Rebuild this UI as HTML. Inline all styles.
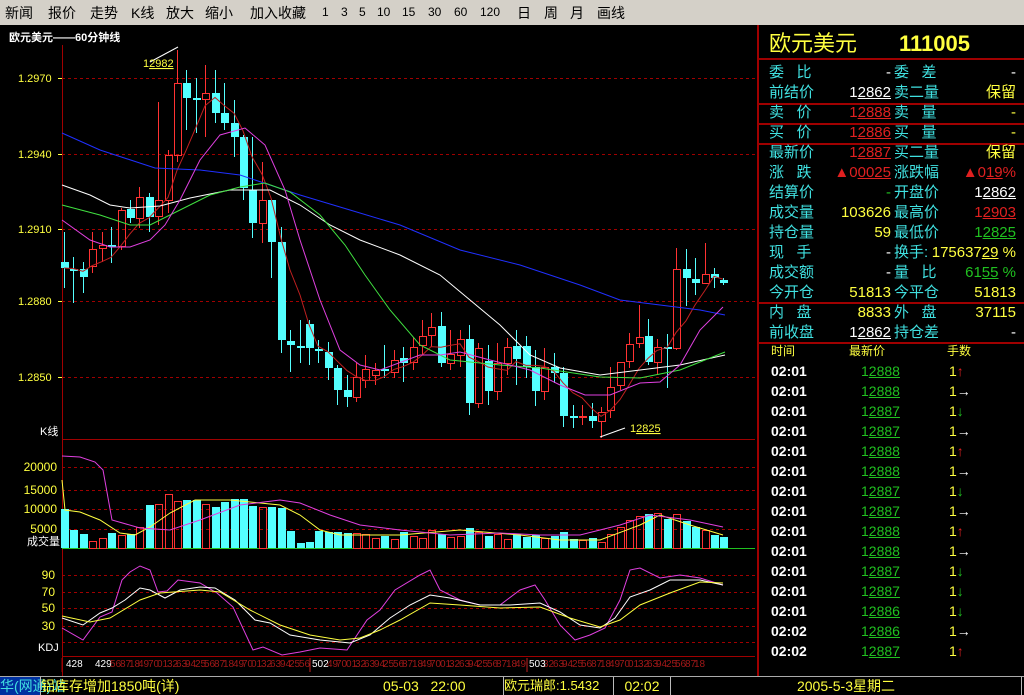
<!DOCTYPE html>
<html><head><meta charset="utf-8">
<style>
*{margin:0;padding:0;box-sizing:border-box}
body{width:1024px;height:695px;background:#000;overflow:hidden;position:relative;font-family:"Liberation Sans","Noto Sans CJK SC",sans-serif}
#menu{position:absolute;left:0;top:0;width:1024px;height:25px;background:#d4d0c8;font-size:14px;color:#000}
#menu span{position:absolute;top:3px;white-space:nowrap}
#rp{position:absolute;left:757px;top:25px;width:267px;height:651px;border-left:2px solid #a00000}
.r{position:absolute;font-size:15px;line-height:20px;white-space:nowrap}
.l1{left:10px;color:#40e0e0}.l2{left:135px;color:#40e0e0}
.v1{right:133px}.v2{right:8px}
.y{color:#ffff40}.w{color:#fff}.rd{color:#e02020}.g{color:#20c020}
.sep{position:absolute;left:0;width:267px;height:2px;background:#a00000}
u{text-decoration:underline}
.t{position:absolute;font-size:14px;line-height:20px;white-space:nowrap}
#sb{position:absolute;left:0;top:676px;width:1024px;height:19px;background:#000;border-top:1px solid #aaa;font-size:14px;color:#ffff40}
#sb div{position:absolute;top:0;height:18px;line-height:18px;white-space:nowrap;border-left:1px solid #bbb}
</style></head><body>
<div id="menu">
<span style="left:5px">新闻</span><span style="left:48px">报价</span><span style="left:90px">走势</span><span style="left:131px">K线</span><span style="left:166px">放大</span><span style="left:205px">缩小</span><span style="left:250px">加入收藏</span><span style="left:322px;font-size:12px;top:5px">1</span><span style="left:341px;font-size:12px;top:5px">3</span><span style="left:359px;font-size:12px;top:5px">5</span><span style="left:377px;font-size:12px;top:5px">10</span><span style="left:402px;font-size:12px;top:5px">15</span><span style="left:428px;font-size:12px;top:5px">30</span><span style="left:454px;font-size:12px;top:5px">60</span><span style="left:480px;font-size:12px;top:5px">120</span><span style="left:517px">日</span><span style="left:544px">周</span><span style="left:570px">月</span><span style="left:597px">画线</span>
</div>
<svg id="ch" width="757" height="651" style="position:absolute;left:0;top:25px" viewBox="0 25 757 651"></svg>
<div id="rp">
<div class="r y" style="left:10px;top:6px;font-size:22px;line-height:26px">欧元美元</div>
<div class="r y" style="left:140px;top:6px;font-size:22px;line-height:26px;font-weight:bold">111005</div>
<div class="sep" style="top:33px"></div>
<div class="r l1" style="top:38px">委&nbsp;&nbsp;&nbsp;比</div><div class="r v1 w" style="top:38px">-</div><div class="r l2" style="top:38px">委&nbsp;&nbsp;&nbsp;差</div><div class="r v2 w" style="top:38px">-</div>
<div class="r l1" style="top:58px">前结价</div><div class="r v1 w" style="top:58px">1<u>2862</u></div><div class="r l2" style="top:58px">卖二量</div><div class="r v2 y" style="top:58px">保留</div>
<div class="sep" style="top:78px"></div>
<div class="r l1" style="top:78px">卖&nbsp;&nbsp;&nbsp;价</div><div class="r v1 rd" style="top:78px">1<u>2888</u></div><div class="r l2" style="top:78px">卖&nbsp;&nbsp;&nbsp;量</div><div class="r v2 y" style="top:78px">-</div>
<div class="sep" style="top:98px"></div>
<div class="r l1" style="top:98px">买&nbsp;&nbsp;&nbsp;价</div><div class="r v1 rd" style="top:98px">1<u>2886</u></div><div class="r l2" style="top:98px">买&nbsp;&nbsp;&nbsp;量</div><div class="r v2 y" style="top:98px">-</div>
<div class="sep" style="top:118px"></div>
<div class="r l1" style="top:118px">最新价</div><div class="r v1 rd" style="top:118px">1<u>2887</u></div><div class="r l2" style="top:118px">买二量</div><div class="r v2 y" style="top:118px">保留</div>
<div class="r l1" style="top:138px">涨&nbsp;&nbsp;&nbsp;跌</div><div class="r v1 rd" style="top:138px">▲0<u>0025</u></div><div class="r l2" style="top:138px">涨跌幅</div><div class="r v2 rd" style="top:138px">▲0<u>19</u>%</div>
<div class="r l1" style="top:158px">结算价</div><div class="r v1 g" style="top:158px">-</div><div class="r l2" style="top:158px">开盘价</div><div class="r v2 w" style="top:158px">1<u>2862</u></div>
<div class="r l1" style="top:178px">成交量</div><div class="r v1 y" style="top:178px">103626</div><div class="r l2" style="top:178px">最高价</div><div class="r v2 rd" style="top:178px">1<u>2903</u></div>
<div class="r l1" style="top:198px">持仓量</div><div class="r v1 y" style="top:198px">59</div><div class="r l2" style="top:198px">最低价</div><div class="r v2 g" style="top:198px">1<u>2825</u></div>
<div class="r l1" style="top:218px">现&nbsp;&nbsp;&nbsp;手</div><div class="r v1 w" style="top:218px">-</div><div class="r l2" style="top:218px">换手:</div><div class="r v2 y" style="top:218px">175637<u>29</u> %</div>
<div class="r l1" style="top:238px">成交额</div><div class="r v1 w" style="top:238px">-</div><div class="r l2" style="top:238px">量&nbsp;&nbsp;&nbsp;比</div><div class="r v2 g" style="top:238px">61<u>55</u> %</div>
<div class="r l1" style="top:258px">今开仓</div><div class="r v1 y" style="top:258px">51813</div><div class="r l2" style="top:258px">今平仓</div><div class="r v2 y" style="top:258px">51813</div>
<div class="sep" style="top:277px"></div>
<div class="r l1" style="top:278px">内&nbsp;&nbsp;&nbsp;盘</div><div class="r v1 y" style="top:278px">8833</div><div class="r l2" style="top:278px">外&nbsp;&nbsp;&nbsp;盘</div><div class="r v2 y" style="top:278px">37115</div>
<div class="r l1" style="top:298px">前收盘</div><div class="r v1 w" style="top:298px">1<u>2862</u></div><div class="r l2" style="top:298px">持仓差</div><div class="r v2 w" style="top:298px">-</div>
<div class="sep" style="top:317px"></div>
<div class="t y" style="left:12px;top:316px;font-size:12px">时间</div><div class="t y" style="left:90px;top:316px;font-size:12px">最新价</div><div class="t y" style="left:188px;top:316px;font-size:12px">手数</div>
<div id="ticks"></div>
</div>
<div id="sb">
<div style="left:0;width:40px;border:none;background:#0030a0;color:#40e0e0">华(网通)站</div>
<div style="left:40px;width:218px;overflow:hidden">铝库存增加1850吨(详)</div>
<div style="left:258px;width:245px;border:none;padding-left:125px">05-03&nbsp;&nbsp;&nbsp;22:00</div>
<div style="left:503px;width:110px;font-size:13px">欧元瑞郎:1.5432</div>
<div style="left:613px;width:57px;text-align:center">02:02</div>
<div style="left:670px;width:352px;text-align:center;border-right:1px solid #bbb">2005-5-3星期二</div>
</div>
<script>
var S='';
function L(x1,y1,x2,y2,c,d){S+='<line x1="'+x1+'" y1="'+y1+'" x2="'+x2+'" y2="'+y2+'" stroke="'+c+'"'+(d?' stroke-dasharray="3,3"':'')+'/>';}
function T(x,y,t,c,s,a,w){S+='<text x="'+x+'" y="'+y+'" fill="'+c+'" font-size="'+s+'" font-family="Liberation Sans,Noto Sans CJK SC,sans-serif"'+(a?' text-anchor="'+a+'"':'')+(w?' font-weight="bold"':'')+'>'+t+'</text>';}
function P(pts,c){S+='<polyline fill="none" stroke="'+c+'" stroke-width="1" points="'+pts.map(function(p){return p.join(',')}).join(' ')+'"/>';}
L(62.5,45,62.5,676,'#a00000');
[78,154,229,301,377].forEach(function(y,i){L(62,y+.5,755,y+.5,'#a00000',1);T(18,y+4,['1.2970','1.2940','1.2910','1.2880','1.2850'][i],'#ffff40',11);L(58,y+.5,62,y+.5,'#ffff40');});
L(62,439.5,755,439.5,'#a00000');T(40,435,'K线','#fff',11);
[467,490,509,529].forEach(function(y,i){L(62,y+.5,755,y+.5,'#a00000',1);T(57,y+4,['20000','15000','10000','5000'][i],'#ffff40',12,'end');});
L(62,548.5,755,548.5,'#20c020');T(60,545,'成交量','#fff',11,'end');
[575,592,608,626,642].forEach(function(y,i){L(62,y+.5,755,y+.5,'#a00000',1);T(55,y+4,['90','70','50','30',''][i],'#ffff40',12,'end');});
T(38,651,'KDJ','#fff',11);
L(62,656.5,755,656.5,'#a00000');
T(9,41,'欧元美元——60分钟线','#fff',11,0,1);
var C=[[262,268,232,288],[269,269,257,303],[269,277,262,293],[266,249,232,273],[248,245,232,262],[245,247,227,263],[246,210,208,250],[209,218,200,223],[218,197,187,228],[197,217,193,232],[216,200,102,225],[200,155,150,213],[155,83,50,162],[83,98,70,130],[98,100,78,133],[99,93,65,137],[93,113,70,123],[113,123,83,130],[123,137,100,157],[137,188,135,200],[190,223,137,238],[223,200,162,243],[200,242,200,278],[242,340,227,353],[341,345,330,372],[346,348,320,363],[324,348,320,365],[349,350,340,363],[352,368,342,380],[368,390,365,405],[390,397,375,407],[397,377,363,402],[380,369,355,388],[375,370,363,385],[369,371,345,378],[372,360,350,378],[358,363,347,382],[362,347,337,370],[345,336,320,355],[335,327,313,347],[326,363,312,367],[363,354,330,370],[355,339,330,367],[339,403,325,415],[403,348,343,408],[361,391,345,405],[391,363,343,400],[363,347,338,375],[346,359,330,385],[346,367,336,378],[367,391,350,406],[391,367,348,400],[367,373,353,383],[373,416,367,427],[416,417,405,428],[417,416,405,425],[416,421,403,428],[421,412,407,438],[410,387,367,418],[385,362,362,390],[361,344,333,368],[343,337,305,348],[336,362,319,365],[362,347,339,375],[347,348,334,388],[348,269,248,350],[269,278,249,306],[279,283,258,295],[283,274,243,283],[274,278,268,288],[280,283,278,285]];
var V=[10,4.5,3.5,1.8,2.6,3.8,3.4,3.5,5.3,11,11.2,13.8,12,12.3,12.2,11.4,10.5,11.8,12.5,12.5,10.8,10.6,10.4,10.2,4.3,1.2,1.6,4.4,4,4.2,3.8,3.8,3.6,2.5,3,2.2,4,3,2.6,4.5,3.5,2.8,3.2,5,4,3.2,3.6,2.4,3.5,2.8,3.3,2.6,3.1,4.2,2.4,2,2.6,1.5,3.6,5.5,7.2,8.3,8.8,9,7.5,8.6,6.8,5.5,4.6,3.4,2.8];
var X=function(i){return Math.round(64+i*9.42)};
var ma=[];
C.forEach(function(c,i){var x=X(i),up=c[1]<c[0],col=up?'#ff3232':'#54ffff';
 var top=Math.min(c[0],c[1]),bot=Math.max(c[0],c[1]);
 if(up){L(x+.5,c[2],x+.5,top,col);L(x+.5,bot,x+.5,c[3],col);S+='<rect x="'+(x-3+.5)+'" y="'+(top+.5)+'" width="7" height="'+Math.max(bot-top,1)+'" fill="none" stroke="'+col+'"/>';}
 else{L(x+.5,c[2],x+.5,c[3],col);S+='<rect x="'+(x-3)+'" y="'+top+'" width="8" height="'+Math.max(bot-top,2)+'" fill="'+col+'"/>';}
 var h=Math.round(V[i]*3.9);
 if(up)S+='<rect x="'+(x-3+.5)+'" y="'+(548-h+.5)+'" width="7" height="'+h+'" fill="none" stroke="#ff3232"/>';
 else S+='<rect x="'+(x-3)+'" y="'+(548-h)+'" width="8" height="'+h+'" fill="#54ffff"/>';
 var s=0,n=0;for(var k=Math.max(0,i-4);k<=i;k++){s+=C[k][1];n++;}ma.push([x,s/n]);
});
P(ma,'#c02020');
P([[62,133],[100,150],[155,168],[200,170],[240,175],[300,195],[350,210],[400,225],[460,250],[520,265],[580,285],[620,300],[660,305],[700,310],[725,315]],'#2030ff');
P([[62,185],[90,195],[110,205],[130,208],[160,206],[190,198],[230,190],[270,190],[300,205],[330,225],[360,240],[400,255],[440,275],[470,300],[500,325],[530,355],[560,368],[600,375],[640,370],[680,365],[725,355]],'#fff');
P([[62,205],[100,215],[130,225],[150,225],[180,210],[210,195],[240,187],[265,183],[290,192],[320,215],[345,245],[365,275],[390,310],[420,345],[450,360],[500,365],[540,368],[600,377],[640,378],[680,370],[725,352]],'#40e040');
P([[62,220],[90,240],[110,247],[130,247],[150,240],[165,225],[180,200],[200,160],[220,135],[245,128],[265,145],[285,190],[300,240],[320,300],[340,350],[360,365],[380,370],[420,355],[440,355],[460,352],[490,360],[530,370],[560,385],[585,395],[610,395],[640,383],[660,382],[680,365],[700,330],[723,307]],'#e040e0');
L(150,62,178,47,'#fff');T(143,67,'1<tspan text-decoration="underline">2982</tspan>','#ffff40',11);
L(600,437,625,428,'#fff');T(630,432,'1<tspan text-decoration="underline">2825</tspan>','#ffff40',11);
P([[62,480],[65,510],[80,512],[100,520],[120,533],[135,535],[150,527],[170,513],[195,500],[230,500],[280,505],[300,515],[320,530],[340,535],[400,535],[460,530],[520,535],[560,540],[600,540],[640,525],[660,515],[690,525],[723,535]],'#ffff40');
P([[62,456],[80,457],[95,462],[103,470],[112,520],[140,528],[170,530],[200,520],[240,505],[280,500],[300,503],[330,515],[360,525],[400,530],[450,535],[500,533],[540,535],[580,535],[620,525],[650,515],[690,520],[723,527]],'#e040e0');
P([[62,628],[83,640],[100,617],[112,612],[122,580],[130,572],[140,566],[150,570],[158,592],[167,591],[178,580],[200,583],[217,593],[233,607],[253,650],[263,647],[282,655],[300,652],[320,648],[347,650],[367,620],[380,610],[395,590],[420,575],[430,570],[440,590],[460,600],[480,605],[500,605],[520,590],[535,585],[545,600],[560,625],[575,640],[590,635],[605,628],[620,600],[630,570],[640,568],[660,578],[680,575],[700,578],[723,585]],'#e040e0');
P([[62,618],[83,625],[100,613],[112,608],[125,600],[140,588],[150,590],[165,598],[180,590],[200,587],[215,588],[235,600],[255,620],[270,623],[290,635],[320,640],[350,643],[370,635],[390,618],[410,605],[430,595],[450,598],[480,605],[510,605],[540,603],[560,612],[580,625],[600,628],[615,618],[630,597],[650,590],[670,580],[700,580],[723,585]],'#fff');
P([[62,616],[90,622],[110,618],[140,600],[160,593],[200,590],[220,592],[250,610],[280,625],[310,635],[340,640],[360,638],[380,630],[400,620],[430,603],[460,605],[500,608],[540,607],[570,618],[600,627],[620,620],[640,605],[670,593],[700,582],[723,583]],'#ffff40');
T(66,667,'428','#fff',10);T(95,667,'429','#fff',10);
for(var i=5;i<68;i++){if(i!==26&&i!==27&&i!==49&&i!==50)T(X(i)-1,667,String((i*3)%10)+String((i+1)%10),'#a01818',10);}
L(62,658,62,672,'#a00000');L(310,658,310,672,'#c02020');L(527,658,527,672,'#c02020');
T(312,667,'502','#fff',10);T(529,667,'503','#fff',10);
document.getElementById('ch').innerHTML=S;
var tk=[['02:01','12888','r'],['02:01','12888','w'],['02:01','12887','g'],['02:01','12887','w'],['02:01','12888','r'],['02:01','12888','w'],['02:01','12887','g'],['02:01','12887','w'],['02:01','12888','r'],['02:01','12888','w'],['02:01','12887','g'],['02:01','12887','g'],['02:01','12886','g'],['02:02','12886','w'],['02:02','12887','r']];
var h='';tk.forEach(function(t,i){var y=336+i*20;var a=t[2]=='r'?'<span style="color:#e02020">↑</span>':t[2]=='g'?'<span style="color:#20c020">↓</span>':'<span style="color:#fff">→</span>';
h+='<div class="t w" style="left:12px;top:'+y+'px;font-weight:bold">'+t[0]+'</div><div class="t g" style="left:102px;top:'+y+'px">1<u>'+t[1].slice(1)+'</u></div><div class="t y" style="left:190px;top:'+y+'px">1'+a+'</div>';});
document.getElementById('ticks').innerHTML=h;
</script>
</body></html>
